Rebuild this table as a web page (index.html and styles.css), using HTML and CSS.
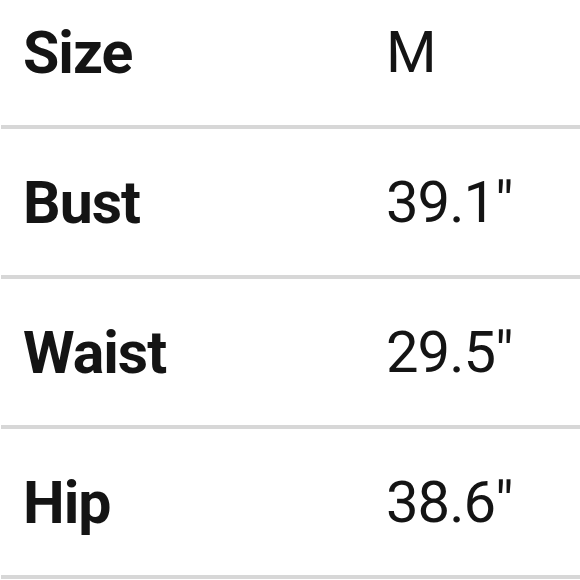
FILE: index.html
```html
<!DOCTYPE html>
<html>
<head>
<meta charset="utf-8">
<link rel="stylesheet" href="styles.css">
</head>
<body>
<div class="table">
  <div class="row"><span class="label">Size</span><span class="value">M</span></div>
  <div class="row"><span class="label">Bust</span><span class="value">39.1"</span></div>
  <div class="row"><span class="label">Waist</span><span class="value">29.5"</span></div>
  <div class="row"><span class="label">Hip</span><span class="value">38.6"</span></div>
</div>
</body>
</html>
```
FILE: styles.css
```css
html, body {
  margin: 0;
  padding: 0;
  background: #ffffff;
  overflow: hidden;
}
.table {
  margin-top: -21px;
  margin-left: 1px;
  font-family: Roboto, "Liberation Sans", sans-serif;
  color: #141414;
}
.row {
  display: grid;
  grid-template-columns: 363px 1fr;
  align-items: center;
  height: 146px;
  padding-left: 22px;
  border-bottom: 4px solid #d7d7d7;
}
.label {
  font-weight: 700;
  font-size: 59px;
  letter-spacing: -1px;
}
.value {
  font-weight: 400;
  font-size: 58px;
  letter-spacing: -1px;
}
```
